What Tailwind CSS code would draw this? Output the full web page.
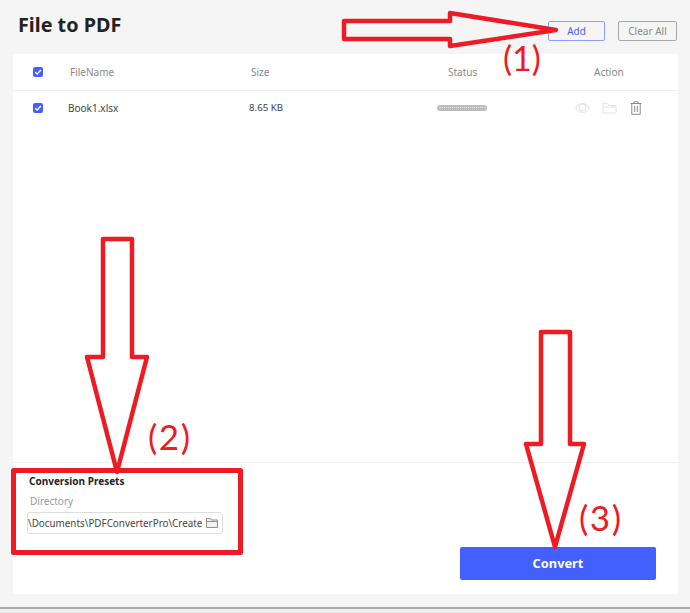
<!DOCTYPE html>
<html lang="en">
<head>
    <meta charset="UTF-8">
    <meta name="viewport" content="width=device-width, initial-scale=1.0">
    <title>File to PDF</title>
    <script src="https://cdn.jsdelivr.net/npm/@tailwindcss/browser@4"></script>
</head>
<body class="bg-[#f5f5f5] font-['Noto_Sans',sans-serif] text-[#333]">
    <div class="relative w-[690px] h-[613px] overflow-hidden">
        <div class="flex flex-col h-[607px]">
            <!-- title bar -->
            <div class="flex items-start h-[54px] pl-[18px] pr-[13px]">
                <h1 class="text-[19.8px] leading-[27px] mt-[11px] font-bold text-[#222]">File to PDF</h1>
                <div class="ml-auto flex gap-[13px] mt-[21px]">
                    <button class="w-[57px] h-[20px] border border-[#8c9dff] rounded-[2px] text-[10px] leading-none text-[#4360ff]">Add</button>
                    <button class="w-[59px] h-[20px] border border-[#a8a8a8] rounded-[2px] text-[10px] leading-none text-[#888]">Clear All</button>
                </div>
            </div>

            <!-- card -->
            <div class="ml-[13px] w-[665px] h-[540px] bg-white rounded-[2px] flex flex-col">
                <div class="flex items-center h-[37px] border-b border-[#f0f0f0] text-[10px] text-[#888]">
                    <span class="ml-[20px] -mt-[1px] w-[10px] h-[10px] rounded-[2px] bg-[#4360ff] flex items-center justify-center">
                        <svg width="8" height="8" viewBox="0 0 8 8" fill="none" stroke="white" stroke-width="1.5"><path d="M1.2 4.2 3.2 6 6.8 2"/></svg>
                    </span>
                    <span class="ml-[27px] mt-[1px] w-[181px]">FileName</span>
                    <span class="w-[197px] mt-[1px]">Size</span>
                    <span class="w-[146px] mt-[1px]">Status</span>
                    <span class="mt-[1px]">Action</span>
                </div>
                <div class="flex items-center h-[34px] text-[10px] text-[#444]">
                    <span class="ml-[20px] w-[10px] h-[10px] rounded-[2px] bg-[#4360ff] flex items-center justify-center">
                        <svg width="8" height="8" viewBox="0 0 8 8" fill="none" stroke="white" stroke-width="1.5"><path d="M1.2 4.2 3.2 6 6.800 2"/></svg>
                    </span>
                    <span class="ml-[25px] w-[181px]">Book1.xlsx</span>
                    <span class="w-[188px] text-[9.7px]">8.65 KB</span>
                    <span class="w-[50px] h-[6px] -mt-[1px] rounded-full bg-[#bdbdbd] flex items-center px-[2px]">
                        <span class="w-full border-t border-dotted border-[#e4e4e4]"></span>
                    </span>
                    <span class="ml-[88px] -mt-[1px] flex items-center">
                        <svg width="15" height="12" viewBox="0 0 15 12" fill="none" stroke="#e2e2e2"><path d="M.7 6C3 2.6 5 1.5 7.5 1.5S12 2.600 14.300 6C12 9.400 10 10.500 7.500 10.500S3 9.400.7 6Z"/><circle cx="7.500" cy="5.500" r="3.500"/></svg>
                        <svg class="ml-[12px]" width="15" height="12" viewBox="0 0 15 12" fill="none" stroke="#e2e2e2"><path d="M1 11V1.500h4.500l1.500 2h7V11Z"/><path d="M1 5h13"/></svg>
                        <svg class="ml-[13px]" width="12" height="14" viewBox="0 0 12 14" fill="none" stroke="#8a8a8a"><path d="M.5 2.500h11M4 2.500V.7h4v1.800M1.800 2.500V13.300h8.400V2.500M4.700 5v6M7.300 5v6"/></svg>
                    </span>
                </div>

                <!-- presets and convert -->
                <div class="mt-auto h-[132px] border-t border-[#f0f0f0] flex justify-between">
                    <div class="pl-[14px]">
                        <p class="ml-[2px] mt-[11px] text-[10px] leading-[14px] font-bold text-[#222]">Conversion Presets</p>
                        <p class="ml-[3px] mt-[6px] text-[10px] leading-[14px] text-[#999]">Directory</p>
                        <div class="mt-[4px] w-[196px] h-[22px] border border-[#dedede] rounded-[3px] flex items-center pr-[4px]">
                            <span class="text-[9.85px] mt-[1px] text-[#444] whitespace-nowrap">\Documents\PDFConverterPro\Create</span>
                            <svg class="ml-auto" width="12" height="10" viewBox="0 0 12 10" fill="#f1f1f1" stroke="#8f8f8f"><path d="M.5 9.500V.5h4l1 1.500h6v7.500Z"/><path d="M.5 3.500h11"/></svg>
                        </div>
                    </div>
                    <button class="mt-[84px] mr-[22px] w-[196px] h-[33px] bg-[#4360ff] rounded-[2px] text-white text-[12.8px] font-bold">Convert</button>
                </div>
            </div>
        </div>
        <div class="h-[6px] bg-[#eeeeee] border-t-2 border-[#a9a9a9]"></div>

        <!-- hand drawn annotations on top of the screenshot -->
        <svg class="absolute left-0 top-0" width="690" height="613" fill="none" stroke="#ed1c24" stroke-width="4.500" stroke-linejoin="round">
            <path d="M344 21H450V13L556 30 450 46V39H344Z"/>
            <path d="M103 239H132V357H147L117 472 87 357H103Z"/>
            <path d="M541 332H570V444H584L555 547 526 444H541Z"/>
            <rect x="13.500" y="470.500" width="227" height="82" stroke-width="5"/>
        </svg>
        <span class="absolute left-[503px] top-[38px] font-['Lato',sans-serif] text-[34px] leading-[40px] text-[#ed1c24]">(1)</span>
        <span class="absolute left-[148px] top-[416px] font-['Lato',sans-serif] text-[35px] leading-[40px] tracking-[1.5px] text-[#ed1c24]">(2)</span>
        <span class="absolute left-[579px] top-[497px] font-['Lato',sans-serif] text-[35px] leading-[40px] tracking-[1.5px] text-[#ed1c24]">(3)</span>
    </div>
</body>
</html>
